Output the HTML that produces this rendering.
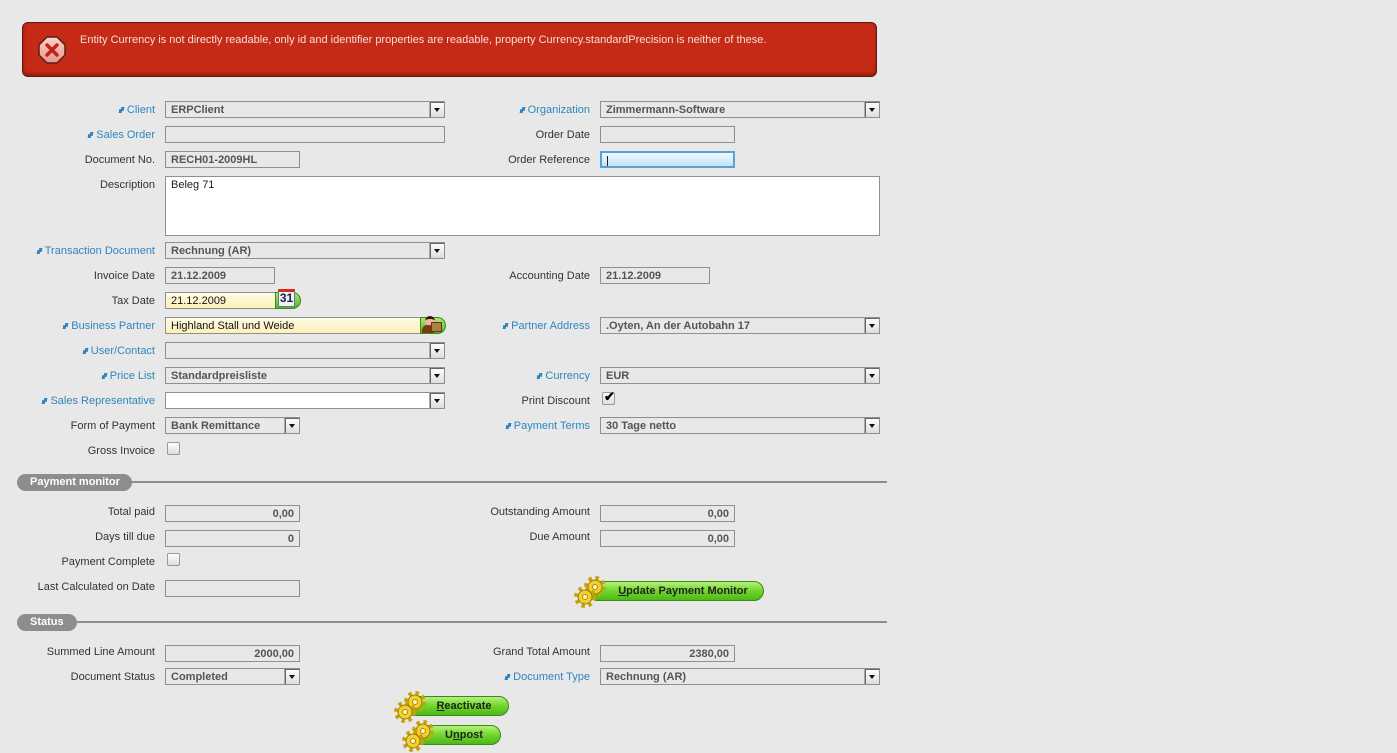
<!DOCTYPE html>
<html><head><meta charset="utf-8"><style>
body{margin:0;width:1397px;height:753px;background:#e8e8e8;font-family:"Liberation Sans",sans-serif;font-size:11px;color:#333;position:relative;overflow:hidden}
div,span{box-sizing:border-box}
.a{position:absolute}
.l{position:absolute;text-align:right;white-space:nowrap;line-height:14px;margin-top:1px}
.lk{color:#2e86c1}
.lk:before{content:"";display:inline-block;width:5px;height:6px;margin-right:3px;background:#2e86c1;clip-path:polygon(0 35%,35% 35%,35% 0,100% 0,100% 65%,65% 65%,65% 100%,0 100%);transform:skewX(-10deg)}
.f{position:absolute;height:17px;border:1px solid #8f8f8f;background:#e8e8e8;font-weight:bold;color:#555;padding:1px 0 0 5px;line-height:14px;white-space:nowrap;overflow:hidden}
.r{text-align:right;padding-right:5px}
.s:after{content:"";position:absolute;right:0;top:0;width:14px;height:15px;background:linear-gradient(#fff,#ddd);border-left:1px solid #aaa;box-shadow:1px 1px 0 #666 inset}
.s:before{content:"";position:absolute;right:4px;top:6px;border:3px solid transparent;border-top:4px solid #111;z-index:2}
.cb{position:absolute;width:13px;height:13px;border:1px solid #999;border-radius:2px;background:linear-gradient(#fff,#ddd)}
.hd{position:absolute;height:17px;border-radius:9px;background:#8d8d8d;color:#fff;font-weight:bold;padding:2px 0 0 13px;line-height:13px}
.hl{position:absolute;height:2px;background:#8d8d8d}
.btn{position:absolute;height:20px;border-radius:10px;border:1px solid #3d8a10;background:linear-gradient(#b6f07c,#6fd62c 50%,#4cb818);font-weight:bold;color:#222;line-height:18px;text-align:center;padding-left:14px}
</style></head><body>
<div class="a" style="left:22px;top:22px;width:855px;height:55px;background:#c42a16;border:1px solid #5c1a0c;border-radius:6px;box-shadow:inset 0 -2px 3px #8d1c0a"></div>
<svg class="a" style="left:38px;top:36px" width="28" height="28" viewBox="0 0 28 28"><defs><linearGradient id="g" x1="0" y1="0" x2="0" y2="1"><stop offset="0" stop-color="#fbd2cc"/><stop offset="1" stop-color="#e8968a"/></linearGradient></defs><polygon points="9,1 19,1 27,9 27,19 19,27 9,27 1,19 1,9" fill="url(#g)" stroke="#5a1d12" stroke-width="1.5"/><path d="M9 9L19 19M19 9L9 19" stroke="#c42318" stroke-width="3.5" stroke-linecap="round"/></svg>
<div class="a" style="left:80px;top:34px;color:#f6ddd8;white-space:nowrap">Entity Currency is not directly readable, only id and identifier properties are readable, property Currency.standardPrecision is neither of these.</div>

<div class="l lk" style="right:1242px;top:102px">Client</div>
<div class="f s" style="left:165px;top:101px;width:280px">ERPClient</div>
<div class="l lk" style="right:807px;top:102px">Organization</div>
<div class="f s" style="left:600px;top:101px;width:280px">Zimmermann-Software</div>

<div class="l lk" style="right:1242px;top:127px">Sales Order</div>
<div class="f" style="left:165px;top:126px;width:280px"></div>
<div class="l" style="right:807px;top:127px">Order Date</div>
<div class="f" style="left:600px;top:126px;width:135px"></div>

<div class="l" style="right:1242px;top:152px">Document No.</div>
<div class="f" style="left:165px;top:151px;width:135px">RECH01-2009HL</div>
<div class="l" style="right:807px;top:152px">Order Reference</div>
<div class="f" style="left:600px;top:151px;width:135px;border:2px solid #5aa0d0;background:linear-gradient(#f2f9ff,#bfe3f7);padding-left:4px;font-weight:normal;color:#000">|</div>

<div class="l" style="right:1242px;top:177px">Description</div>
<div class="f" style="left:165px;top:176px;width:715px;height:60px;background:#fff;font-weight:normal;color:#222;padding-top:1px">Beleg 71</div>

<div class="l lk" style="right:1242px;top:243px">Transaction Document</div>
<div class="f s" style="left:165px;top:242px;width:280px">Rechnung (AR)</div>

<div class="l" style="right:1242px;top:268px">Invoice Date</div>
<div class="f" style="left:165px;top:267px;width:110px">21.12.2009</div>
<div class="l" style="right:807px;top:268px">Accounting Date</div>
<div class="f" style="left:600px;top:267px;width:110px">21.12.2009</div>

<div class="l" style="right:1242px;top:293px">Tax Date</div>
<div class="f" style="left:165px;top:292px;width:111px;background:linear-gradient(#fffbe6,#fdf0b8);font-weight:normal;color:#111">21.12.2009</div>
<div class="a" style="left:275px;top:292px;width:26px;height:17px;border-radius:0 9px 9px 0;background:linear-gradient(#a8ea78,#4fb72a);border:1px solid #3d8a10"></div>
<div class="a" style="left:278px;top:289px;width:17px;height:18px;background:#eaf2fb;border:1px solid #777;border-top:3px solid #d8281a;font-weight:bold;font-size:12px;text-align:center;line-height:13px;color:#223">31</div>

<div class="l lk" style="right:1242px;top:318px">Business Partner</div>
<div class="f" style="left:165px;top:317px;width:256px;background:linear-gradient(#fffbe6,#fdf0b8);font-weight:normal;color:#111">Highland Stall und Weide</div>
<div class="a" style="left:420px;top:317px;width:26px;height:17px;border-radius:0 9px 9px 0;background:linear-gradient(#a8ea78,#4fb72a);border:1px solid #3d8a10"></div>
<div class="a" style="left:425px;top:316px;width:10px;height:10px;border-radius:50%;background:#f0b8a0;border-top:3px solid #2a1a10"></div>
<div class="a" style="left:422px;top:325px;width:12px;height:8px;border-radius:5px 5px 0 0;background:#7a3a10"></div>
<div class="a" style="left:431px;top:322px;width:11px;height:10px;background:#b08040;border:1px solid #5a3a10"></div>
<div class="l lk" style="right:807px;top:318px">Partner Address</div>
<div class="f s" style="left:600px;top:317px;width:280px">.Oyten, An der Autobahn 17</div>

<div class="l lk" style="right:1242px;top:343px">User/Contact</div>
<div class="f s" style="left:165px;top:342px;width:280px"></div>

<div class="l lk" style="right:1242px;top:368px">Price List</div>
<div class="f s" style="left:165px;top:367px;width:280px">Standardpreisliste</div>
<div class="l lk" style="right:807px;top:368px">Currency</div>
<div class="f s" style="left:600px;top:367px;width:280px">EUR</div>

<div class="l lk" style="right:1242px;top:393px">Sales Representative</div>
<div class="f s" style="left:165px;top:392px;width:280px;background:#fff"></div>
<div class="l" style="right:807px;top:393px">Print Discount</div>
<div class="cb" style="left:602px;top:392px"></div>
<div class="a" style="left:604px;top:389px;font-size:13px;font-weight:bold;color:#000">✔</div>

<div class="l" style="right:1242px;top:418px">Form of Payment</div>
<div class="f s" style="left:165px;top:417px;width:135px">Bank Remittance</div>
<div class="l lk" style="right:807px;top:418px">Payment Terms</div>
<div class="f s" style="left:600px;top:417px;width:280px">30 Tage netto</div>

<div class="l" style="right:1242px;top:443px">Gross Invoice</div>
<div class="cb" style="left:167px;top:442px"></div>

<div class="hl" style="left:120px;top:481px;width:767px"></div>
<div class="hd" style="left:17px;top:474px;width:115px">Payment monitor</div>

<div class="l" style="right:1242px;top:504px">Total paid</div>
<div class="f r" style="left:165px;top:505px;width:135px">0,00</div>
<div class="l" style="right:807px;top:504px">Outstanding Amount</div>
<div class="f r" style="left:600px;top:505px;width:135px">0,00</div>

<div class="l" style="right:1242px;top:529px">Days till due</div>
<div class="f r" style="left:165px;top:530px;width:135px">0</div>
<div class="l" style="right:807px;top:529px">Due Amount</div>
<div class="f r" style="left:600px;top:530px;width:135px">0,00</div>

<div class="l" style="right:1242px;top:554px">Payment Complete</div>
<div class="cb" style="left:167px;top:553px"></div>

<div class="l" style="right:1242px;top:579px">Last Calculated on Date</div>
<div class="f" style="left:165px;top:580px;width:135px"></div>

<div class="btn" style="left:588px;top:581px;width:176px"><u>U</u>pdate Payment Monitor</div>

<div class="hl" style="left:70px;top:621px;width:817px"></div>
<div class="hd" style="left:17px;top:614px;width:60px">Status</div>

<div class="l" style="right:1242px;top:644px">Summed Line Amount</div>
<div class="f r" style="left:165px;top:645px;width:135px">2000,00</div>
<div class="l" style="right:807px;top:644px">Grand Total Amount</div>
<div class="f r" style="left:600px;top:645px;width:135px">2380,00</div>

<div class="l" style="right:1242px;top:669px">Document Status</div>
<div class="f s" style="left:165px;top:668px;width:135px">Completed</div>
<div class="l lk" style="right:807px;top:669px">Document Type</div>
<div class="f s" style="left:600px;top:668px;width:280px">Rechnung (AR)</div>

<div class="btn" style="left:405px;top:696px;width:104px"><u>R</u>eactivate</div>
<div class="btn" style="left:413px;top:725px;width:88px">U<u>n</u>post</div>

<svg width="0" height="0" style="position:absolute"><defs><g id="gear"><circle r="8.5" fill="none" stroke="#c9a10a" stroke-width="5" stroke-dasharray="3.3 3.4"/><circle r="7" fill="#f2cf2a" stroke="#9a7a08" stroke-width="1"/><circle r="2.5" fill="#fff6c0" stroke="#9a7a08" stroke-width=".8"/></g></defs></svg>
<svg class="a" style="left:574px;top:576px" width="34" height="32"><use href="#gear" x="21" y="11"/><use href="#gear" x="11" y="21"/></svg>
<svg class="a" style="left:394px;top:691px" width="34" height="32"><use href="#gear" x="21" y="11"/><use href="#gear" x="11" y="21"/></svg>
<svg class="a" style="left:402px;top:720px" width="34" height="32"><use href="#gear" x="21" y="11"/><use href="#gear" x="11" y="21"/></svg>
</body></html>
